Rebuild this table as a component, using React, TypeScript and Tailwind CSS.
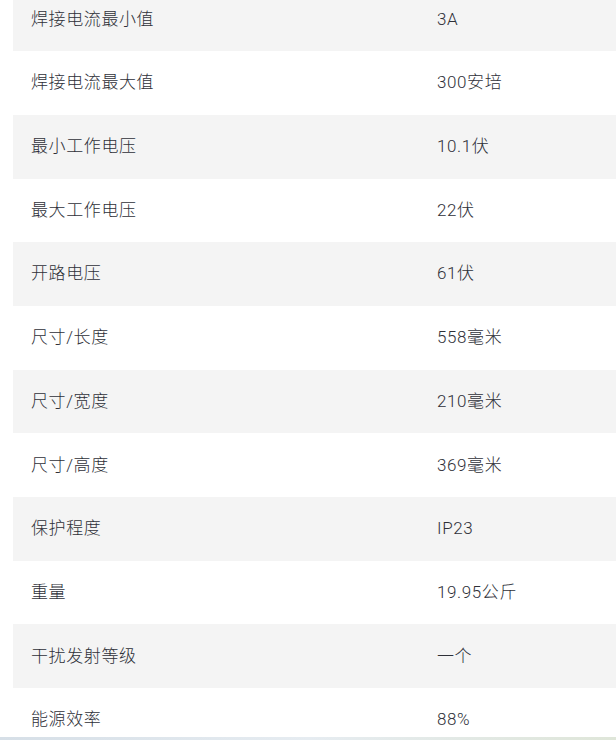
import React from 'react';

const specs: [string, string][] = [
  ['焊接电流最小值', '3A'],
  ['焊接电流最大值', '300安培'],
  ['最小工作电压', '10.1伏'],
  ['最大工作电压', '22伏'],
  ['开路电压', '61伏'],
  ['尺寸/长度', '558毫米'],
  ['尺寸/宽度', '210毫米'],
  ['尺寸/高度', '369毫米'],
  ['保护程度', 'IP23'],
  ['重量', '19.95公斤'],
  ['干扰发射等级', '一个'],
  ['能源效率', '88%'],
];

export default function App() {
  return (
    <div className="flex h-[740px] flex-col overflow-hidden bg-white">
      {/* Spec table, scrolled so the first row is partly hidden */}
      <div className="min-h-0 flex-1 overflow-hidden pl-[13px]">
        <div
          className="-mt-[12.4px] text-[17px] font-light tracking-[0.6px] text-[#2e3038]"
          style={{ fontFamily: 'Roboto, "Noto Sans CJK SC", sans-serif' }}
        >
          {specs.map(([label, value], i) => (
            <div
              key={label}
              className={`grid h-[63.7px] grid-cols-[405px_1fr] items-center ${i % 2 === 0 ? 'bg-[#f4f4f4]' : 'bg-white'}`}
            >
              <div className="pl-[18px]">{label}</div>
              <div className="pl-[19px]">{value}</div>
            </div>
          ))}
        </div>
      </div>

      {/* Edge of the bar beneath */}
      <div className="h-[3px] shrink-0 bg-gradient-to-r from-[#d6dfe7] via-[#e6ecf1] to-[#dfe6d9]" />
    </div>
  );
}
